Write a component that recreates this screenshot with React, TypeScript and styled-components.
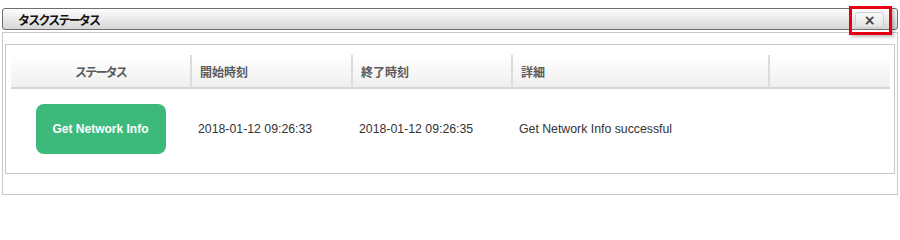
import styled, { createGlobalStyle } from "styled-components";

const GlobalStyle = createGlobalStyle`
  html, body {
    margin: 0;
    padding: 0;
    background: #ffffff;
  }
  body {
    font-family: "Liberation Sans", Arial, "Noto Sans CJK JP", sans-serif;
  }
`;

const Page = styled.div`
  width: 896px;
  padding: 8px 0 0 2px;
`;

const TitleBar = styled.div`
  height: 20px;
  border: 1px solid #6e6e6e;
  border-radius: 3px;
  background: linear-gradient(180deg, #fdfdfd 0%, #ececec 45%, #d6d6d6 100%);
  display: flex;
  align-items: center;
  justify-content: space-between;
  padding: 0 13px 0 15px;
`;

const Title = styled.span`
  font-family: "Noto Sans CJK JP", sans-serif;
  font-weight: 700;
  font-size: 12px;
  color: #111;
  letter-spacing: -1.8px;
`;

const CloseButton = styled.button`
  position: relative;
  width: 29px;
  height: 16px;
  margin-top: 2px;
  padding: 0;
  border: 1px solid #d0d0d0;
  border-radius: 3px;
  background: linear-gradient(180deg, #fafafa 0%, #e2e2e2 100%);
  color: #444;
  font-family: "DejaVu Sans", sans-serif;
  font-size: 14px;
  font-weight: 700;
  line-height: 14px;
  cursor: pointer;
`;

const Highlight = styled.span`
  position: absolute;
  top: -7px;
  left: -7px;
  right: -9px;
  bottom: -8px;
  border: 3px solid #e60012;
  box-shadow: 2px 2px 3px rgba(0, 0, 0, 0.25);
  pointer-events: none;
`;

const OuterPanel = styled.div`
  margin-top: 2px;
  border: 1px solid #c8c8c8;
  padding: 11px 2px 20px 2px;
`;

const InnerPanel = styled.div`
  border: 1px solid #c8c8c8;
  padding: 10px 4px 4px 5px;
`;

const Grid = styled.div`
  display: grid;
  grid-template-columns: 179px 161px 160px 257px 1fr;
`;

const HeadCell = styled.div<{ $center?: boolean; $first?: boolean; $kana?: boolean }>`
  height: 32px;
  display: flex;
  align-items: center;
  justify-content: ${(p) => (p.$center ? "center" : "flex-start")};
  padding-left: ${(p) => (p.$center ? "0" : "8px")};
  background: linear-gradient(180deg, #ffffff 0%, #efefef 100%);
  border-bottom: 2px solid #d6d6d6;
  border-left: ${(p) => (p.$first ? "none" : "2px solid #dcdcdc")};
  font-family: "Noto Sans CJK JP", sans-serif;
  font-weight: 700;
  font-size: 12px;
  color: #5a5a5a;
  letter-spacing: ${(p) => (p.$kana ? "-1.8px" : "0")};
`;

const Cell = styled.div<{ $center?: boolean }>`
  height: 80px;
  display: flex;
  align-items: center;
  justify-content: ${(p) => (p.$center ? "center" : "flex-start")};
  padding-left: ${(p) => (p.$center ? "0" : "8px")};
  font-size: 12.3px;
  color: #333;
`;

const TaskButton = styled.div`
  width: 130px;
  height: 50px;
  border-radius: 8px;
  background: #3dba7b;
  color: #fff;
  font-weight: 700;
  font-size: 12px;
  display: flex;
  align-items: center;
  justify-content: center;
`;

const columns = ["開始時刻", "終了時刻", "詳細", ""];

export default function App() {
  return (
    <>
      <GlobalStyle />
      <Page>
        <TitleBar>
          <Title>タスクステータス</Title>
          <CloseButton aria-label="close">
            ×
            <Highlight />
          </CloseButton>
        </TitleBar>
        <OuterPanel>
          <InnerPanel>
            <Grid>
              <HeadCell $center $first $kana>
                ステータス
              </HeadCell>
              {columns.map((c, i) => (
                <HeadCell key={i}>{c}</HeadCell>
              ))}
              <Cell $center>
                <TaskButton>Get Network Info</TaskButton>
              </Cell>
              <Cell>2018-01-12 09:26:33</Cell>
              <Cell>2018-01-12 09:26:35</Cell>
              <Cell>Get Network Info successful</Cell>
              <Cell />
            </Grid>
          </InnerPanel>
        </OuterPanel>
      </Page>
    </>
  );
}
